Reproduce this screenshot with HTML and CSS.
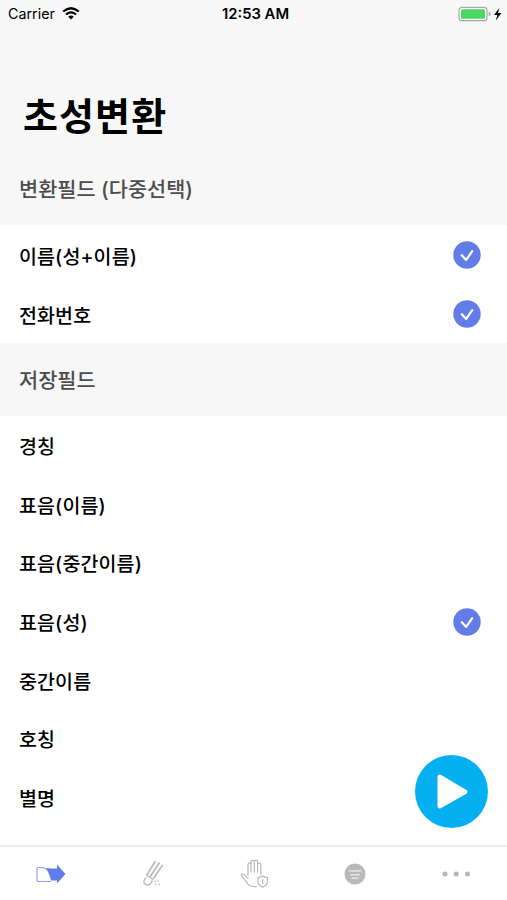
FILE: index.html
```html
<!DOCTYPE html>
<html lang="ko">
<head>
<meta charset="utf-8">
<title>초성변환</title>
<link rel="stylesheet" href="styles.css">
</head>
<body>
<svg class="defs" aria-hidden="true">
  <symbol id="check" viewBox="0 0 28 28">
    <circle cx="14" cy="14" r="13.7" fill="#627de7"/>
    <path d="M8.8 14.2l4.4 4.7 6-8.7" fill="none" stroke="#fff" stroke-width="2.2" stroke-linecap="round" stroke-linejoin="round"/>
  </symbol>
</svg>
<div class="app">
  <header class="status">
    <div class="carrier"><span>Carrier</span>
      <svg width="18" height="13" viewBox="0 0 18 13" fill="none" stroke="#000" stroke-width="2.2"><path d="M1.2 4.5Q9-2 16.8 4.5M4 7.5q5-4.2 10 0"/><path d="M9 12.5L6.2 9.7q2.8-2.2 5.6 0z" fill="#000" stroke="none"/></svg>
    </div>
    <div class="time">12:53 AM</div>
    <div class="power">
      <svg width="44" height="16" viewBox="0 0 44 16"><rect x="1" y="1.3" width="28" height="13.4" rx="3.3" fill="#fff" stroke="#aaa" stroke-width="1.2"/><rect x="3" y="3.2" width="24" height="9.6" rx="1.5" fill="#4bd763"/><path d="M30.7 5.8q2 .5 2 2.2t-2 2.2z" fill="#aaa"/><path d="M41.2 2L36 9h3.3l-1.4 5.4L43.4 7H40z" fill="#000"/></svg>
    </div>
  </header>
  <h1 class="title">초성변환</h1>
  <h2 class="section">변환필드 (다중선택)</h2>
  <ul class="list">
    <li class="row"><span>이름(성+이름)</span><svg class="mark"><use href="#check"/></svg></li>
    <li class="row"><span>전화번호</span><svg class="mark"><use href="#check"/></svg></li>
  </ul>
  <h2 class="section">저장필드</h2>
  <ul class="list fill">
    <li class="row"><span>경칭</span></li>
    <li class="row"><span>표음(이름)</span></li>
    <li class="row"><span>표음(중간이름)</span></li>
    <li class="row"><span>표음(성)</span><svg class="mark"><use href="#check"/></svg></li>
    <li class="row"><span>중간이름</span></li>
    <li class="row"><span>호칭</span></li>
    <li class="row"><span>별명</span></li>
  </ul>
  <nav class="tabs">
    <div class="tab"><svg width="32" height="22" viewBox="0 0 32 22"><path d="M2 17.5V5.5q0-1 1-1h5l2 1.3h5M2 17.5q0 1 1 1h13" fill="none" stroke="#8c9ff0" stroke-width="1.1"/><path d="M10.5 5.5H22V1.5L30.5 11 22 20.5V17.5H16Q14 9 10.5 5.5z" fill="#627de7"/></svg></div>
    <div class="tab"><svg width="24" height="30" viewBox="0 0 24 30" fill="none" stroke="#bbb" stroke-width="1.4"><path d="M13.5 2L4.5 16.5M17.5 3.5L8 18M20.5 6L11.5 19.5" stroke-width="1.8"/><path d="M4.5 16.5l7 4.2M4 18.8q-3 3-1.8 5.4 2.8 3 6 .8l2.3-3.8"/><path d="M12.5 22.2h1.5M15.5 22.5l1-1M13 25.5h1.5M16.5 25.5h1.5"/></svg></div>
    <div class="tab"><svg width="30" height="30" viewBox="0 0 30 30" fill="none" stroke="#b9b9b9" stroke-width="1.25" stroke-linecap="round" stroke-linejoin="round"><path d="M8 16V5.5q0-1.6 1.5-1.6T11 5.5V13 3q0-1.6 1.7-1.6T14.4 3v10V2.5q0-1.5 1.6-1.5t1.6 1.5V13 5.5q0-1.5 1.6-1.5t1.6 1.5V15M8 19l-4.5-3.5q-2-1-2.2.8L7.8 25q2.2 3 8.4 2.6"/><path d="M22.7 17q2.2 1.5 4.8 1.5v4q0 3.5-4.8 5.7-4.8-2.2-4.8-5.7v-4q2.6 0 4.8-1.5zM22.7 20.7v3.8"/></svg></div>
    <div class="tab"><svg width="22" height="22" viewBox="0 0 22 22"><circle cx="11" cy="11" r="10.5" fill="#b9b9b9"/><path d="M4.5 8h13M6.2 11.7h9.6M7.5 15.2h7" stroke="#e5e5e5" stroke-width="1.6"/></svg></div>
    <div class="tab"><svg width="30" height="8" viewBox="0 0 30 8" fill="#b5b5b5"><circle cx="4" cy="4" r="2.5"/><circle cx="15.2" cy="4" r="2.5"/><circle cx="26.4" cy="4" r="2.5"/></svg></div>
  </nav>
  <button class="play" aria-label="변환 시작"><svg width="73" height="73" viewBox="0 0 74 74"><path d="M25 22l26 15.3L25 52z" fill="#fff" stroke="#fff" stroke-width="4.4" stroke-linejoin="round"/></svg></button>
</div>
</body>
</html>
```
FILE: styles.css
```css
* { box-sizing: border-box; }
body {
  margin: 0;
  background: #fff;
  color: #000;
  font-family: Inter, "Noto Sans CJK KR", sans-serif;
}
.defs { position: absolute; width: 0; height: 0; }
svg { display: block; }
.app {
  position: relative;
  display: flex;
  flex-direction: column;
  width: 507px;
  height: 900px;
  overflow: hidden;
}
.status {
  display: grid;
  grid-template-columns: 1fr auto 1fr;
  align-items: center;
  height: 77px;
  padding: 0 5px 50px 8px;
  background: #f7f7f7;
  font-size: 14.3px;
  line-height: 26px;
}
.carrier { display: flex; align-items: center; gap: 7px; }
.time { padding-left: 1px; font-size: 14.8px; font-weight: 600; }
.power { display: flex; justify-content: flex-end; }
.title {
  height: 75px;
  margin: 0;
  padding-left: 23px;
  background: #f7f7f7;
  font-family: "Noto Sans CJK KR", sans-serif;
  font-size: 38px;
  line-height: 73px;
  letter-spacing: 1.1px;
  font-weight: 700;
}
.section {
  height: 73px;
  margin: 0;
  padding: 1px 0 0 19px;
  background: #f7f7f7;
  color: #4d4d4d;
  font-size: 20.8px;
  line-height: 73px;
  font-weight: 500;
}
.list { margin: 0; padding: 0; list-style: none; }
.list.fill { flex: 1; }
.row {
  display: flex;
  align-items: center;
  justify-content: space-between;
  height: 58.6px;
  padding: 1px 26.5px 0 19px;
  font-size: 19.5px;
  line-height: 28px;
  letter-spacing: 0.12px;
  font-weight: 500;
}
.list:not(.fill) .row { height: 59px; }
.row span { padding-top: 3px; }
.mark { width: 28px; height: 28px; }
.tabs {
  display: grid;
  grid-template-columns: repeat(5, 1fr);
  height: 55px;
  border-top: 2px solid #ededed;
  background: #fff;
}
.tab { display: flex; align-items: center; justify-content: center; }
.tab:nth-child(2), .tab:nth-child(3) { padding-left: 3px; }
.play {
  position: absolute;
  right: 19px;
  bottom: 72px;
  width: 73px;
  height: 73px;
  padding: 0;
  border: 0;
  border-radius: 50%;
  background: #05b0f2;
}
```
